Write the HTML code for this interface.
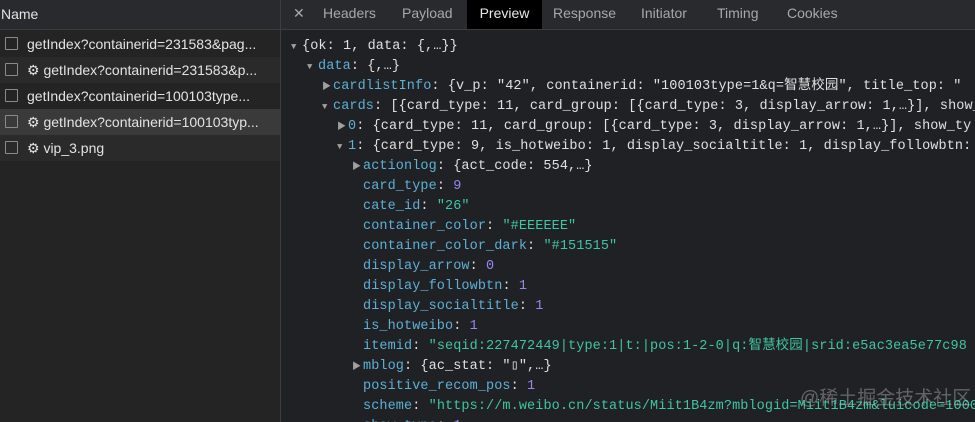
<!DOCTYPE html>
<html><head><meta charset="utf-8"><style>
html,body{margin:0;width:975px;height:422px;overflow:hidden;background:#202124;font-family:"Liberation Sans","Noto Sans CJK SC",sans-serif;}
#left{position:absolute;left:0;top:0;width:280px;height:422px;background:#242424;border-right:1px solid #3d3d3d;}
#left .hd{height:29px;border-bottom:1px solid #3d3d3d;color:#e3e3e3;font-size:14px;line-height:29px;padding-left:1px;background:#292a2d}
.row{position:absolute;left:0;width:280px;height:26px;color:#e3e3e3;font-size:14px;line-height:26px;white-space:nowrap;overflow:hidden}
.row .cb{position:absolute;left:5px;top:6px;width:11px;height:11px;border:1px solid #8a8a8a;border-radius:1px}
.row span{position:absolute;left:27px}
#tabs{position:absolute;left:281px;top:0;width:694px;height:29px;background:#292a2d;border-bottom:1px solid #3d3d3d;color:#a8a8a8;font-size:14px;line-height:27px;overflow:hidden}
#tabs span{position:absolute;top:0}
#pv{position:absolute;left:281px;top:31px;width:694px;height:391px;overflow:hidden;background:#202124;font-family:"Liberation Mono","Noto Sans CJK SC",monospace;font-size:13.5px;letter-spacing:.1px;color:#e0e0e0;white-space:pre}
.l{position:absolute;height:20px;line-height:20px}
.k{color:#5db0d7}.s{color:#3fc5a5}.n{color:#9a84f4}
.a{position:absolute;left:-11px;top:0;color:#a0a0a0;font-size:9px;letter-spacing:0;font-style:normal}
</style></head><body>
<div id="left"><div class="hd">Name</div>
<div class="row" style="top:31px;background:#242424"><div class="cb"></div><span>getIndex?containerid=231583&amp;pag...</span></div>
<div class="row" style="top:57px;background:#2a2a2a"><div class="cb"></div><span>⚙ getIndex?containerid=231583&amp;p...</span></div>
<div class="row" style="top:83px;background:#242424"><div class="cb"></div><span>getIndex?containerid=100103type...</span></div>
<div class="row" style="top:109px;background:#3a3a3a"><div class="cb"></div><span>⚙ getIndex?containerid=100103typ...</span></div>
<div class="row" style="top:135px;background:#2a2a2a"><div class="cb"></div><span>⚙ vip_3.png</span></div>
</div>
<div id="tabs">
<span style="left:12px">✕</span><span style="left:42px">Headers</span><span style="left:121px">Payload</span>
<span style="left:186px;width:75px;height:29px;background:#000;color:#e8e8e8;text-align:center">Preview</span>
<span style="left:272px">Response</span><span style="left:360px">Initiator</span><span style="left:436px">Timing</span><span style="left:506px">Cookies</span>
</div>
<div id="pv">
<div class="l" style="top:6px;left:21px"><i class="a">▼</i>{ok: 1, data: {,…}}</div>
<div class="l" style="top:26px;left:37px"><i class="a">▼</i><span class="k">data</span>: {,…}</div>
<div class="l" style="top:46px;left:52px"><i class="a">▶</i><span class="k">cardlistInfo</span>: {v_p: "42", containerid: "100103type=1&amp;q=智慧校园", title_top: "</div>
<div class="l" style="top:66px;left:52px"><i class="a">▼</i><span class="k">cards</span>: [{card_type: 11, card_group: [{card_type: 3, display_arrow: 1,…}], show_</div>
<div class="l" style="top:86px;left:67px"><i class="a">▶</i><span class="k">0</span>: {card_type: 11, card_group: [{card_type: 3, display_arrow: 1,…}], show_ty</div>
<div class="l" style="top:106px;left:67px"><i class="a">▼</i><span class="k">1</span>: {card_type: 9, is_hotweibo: 1, display_socialtitle: 1, display_followbtn:</div>
<div class="l" style="top:126px;left:82px"><i class="a">▶</i><span class="k">actionlog</span>: {act_code: 554,…}</div>
<div class="l" style="top:146px;left:82px"><span class="k">card_type</span>: <span class="n">9</span></div>
<div class="l" style="top:166px;left:82px"><span class="k">cate_id</span>: <span class="s">"26"</span></div>
<div class="l" style="top:186px;left:82px"><span class="k">container_color</span>: <span class="s">"#EEEEEE"</span></div>
<div class="l" style="top:206px;left:82px"><span class="k">container_color_dark</span>: <span class="s">"#151515"</span></div>
<div class="l" style="top:226px;left:82px"><span class="k">display_arrow</span>: <span class="n">0</span></div>
<div class="l" style="top:246px;left:82px"><span class="k">display_followbtn</span>: <span class="n">1</span></div>
<div class="l" style="top:266px;left:82px"><span class="k">display_socialtitle</span>: <span class="n">1</span></div>
<div class="l" style="top:286px;left:82px"><span class="k">is_hotweibo</span>: <span class="n">1</span></div>
<div class="l" style="top:306px;left:82px"><span class="k">itemid</span>: <span class="s">"seqid:227472449|type:1|t:|pos:1-2-0|q:智慧校园|srid:e5ac3ea5e77c98</span></div>
<div class="l" style="top:326px;left:82px"><i class="a">▶</i><span class="k">mblog</span>: {ac_stat: "▯",…}</div>
<div class="l" style="top:346px;left:82px"><span class="k">positive_recom_pos</span>: <span class="n">1</span></div>
<div class="l" style="top:366px;left:82px"><span class="k">scheme</span>: <span class="s">"https://m.weibo.cn/status/Miit1B4zm?mblogid=Miit1B4zm&amp;luicode=1000</span></div>
<div class="l" style="top:386px;left:82px"><span class="k">show_type</span>: <span class="n">1</span></div>
</div>
<div style="position:absolute;left:800px;top:383px;color:rgba(200,200,200,.4);font-size:19px;font-family:'Liberation Sans','Noto Sans CJK SC',sans-serif;white-space:nowrap">@稀土掘金技术社区</div>
</body></html>
